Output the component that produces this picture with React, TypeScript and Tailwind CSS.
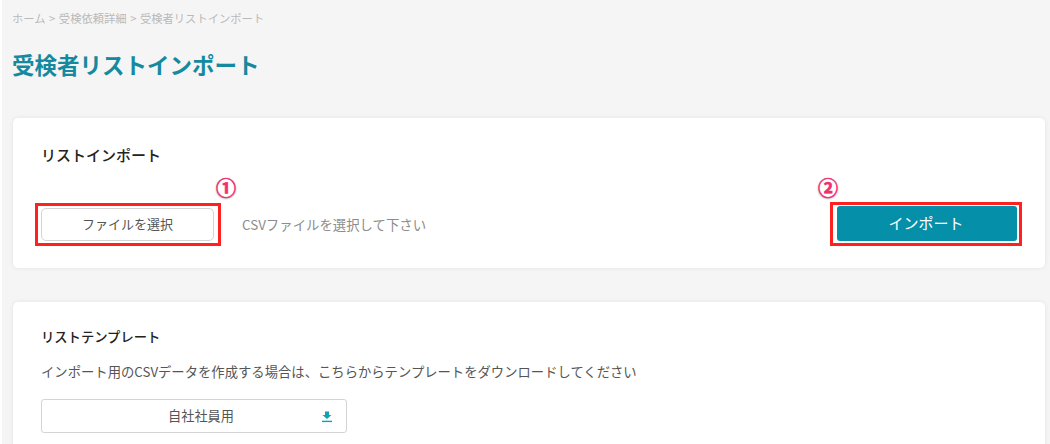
const font = { fontFamily: '"Noto Sans CJK JP", "Noto Sans", sans-serif' };

function Badge({ children, className }: { children: string; className: string }) {
  return (
    <span
      className={`absolute flex h-[20px] w-[20px] items-center justify-center rounded-full bg-white text-[20px] leading-none font-bold text-[#f0306e] shadow-[0_1px_2px_rgba(0,0,0,0.3)] [-webkit-text-stroke:0.6px_#f0306e] ${className}`}
    >
      {children}
    </span>
  );
}

export default function App() {
  return (
    <div className="h-[444px] w-[1050px] overflow-hidden bg-white pl-[2px]" style={font}>
      <div className="h-full bg-[#f5f5f5] pt-[11px] pr-[5px] pl-[10px]">
        <nav className="flex items-center gap-[3.5px] text-[11.3px] leading-[14px] text-[#b9b9b9]">
          <span>ホーム</span>
          <span>&gt;</span>
          <span>受検依頼詳細</span>
          <span>&gt;</span>
          <span>受検者リストインポート</span>
        </nav>
        <h1 className="mt-[22px] mb-[37px] text-[22.5px] leading-[34px] font-bold text-[#14899f]">受検者リストインポート</h1>

        <section className="ml-[1px] h-[150px] rounded-[5px] bg-white pt-[26px] pr-[23px] pl-[22px] shadow-[0_0_4px_rgba(0,0,0,0.08)]">
          <h2 className="pl-[6px] text-[15px] leading-[22px] font-medium text-[#222]">リストインポート</h2>
          <div className="mt-[36px] flex items-center">
            <div className="relative h-[43px] w-[186px] border-[3px] border-[#ff2020] px-[3px] py-[2px]">
              <button className="h-[33px] w-[173px] rounded-[5px] border border-[#d4d4d4] bg-white text-[13px] text-[#555]">
                ファイルを選択
              </button>
              <Badge className="top-[-28px] right-[-18px]">①</Badge>
            </div>
            <p className="ml-[21px] text-[13.4px] text-[#8c8c8c]">CSVファイルを選択して下さい</p>
            <div className="relative ml-auto h-[44px] w-[192px] border-[3px] border-[#ff2020] px-[4px] py-[1px]">
              <button className="h-[35px] w-[180px] rounded-[3px] bg-[#068fa9] pr-[2px] text-[15px] text-white">インポート</button>
              <Badge className="top-[-27px] left-[-15px]">②</Badge>
            </div>
          </div>
        </section>

        <section className="mt-[34px] ml-[1px] h-[200px] rounded-[5px] bg-white pt-[25px] pr-[23px] pl-[28px] shadow-[0_0_4px_rgba(0,0,0,0.08)]">
          <h2 className="text-[13.3px] leading-[20px] font-medium text-[#222]">リストテンプレート</h2>
          <p className="mt-[15px] text-[13.34px] leading-[20px] text-[#555]">
            インポート用のCSVデータを作成する場合は、こちらからテンプレートをダウンロードしてください
          </p>
          <button className="relative mt-[17px] h-[34px] w-[306px] rounded-[3px] border border-[#d4d4d4] bg-white pl-[14px] text-[13.2px] text-[#555]">
            自社社員用
            <svg className="absolute top-[11px] right-[13px]" width="12" height="12" viewBox="0 0 12 12" fill="#14a0b5">
              <path d="M4 0.5h4v3.5h2.5L6 8 1.5 4H4z" />
              <rect x="1" y="9.7" width="10" height="1.4" />
            </svg>
          </button>
        </section>
      </div>
    </div>
  );
}
